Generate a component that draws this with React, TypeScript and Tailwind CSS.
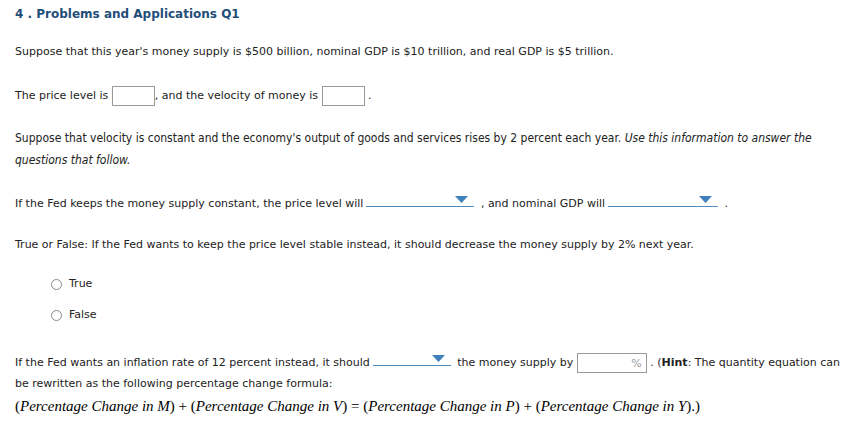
import React from "react";

function Blank() {
  return (
    <span className="inline-block w-[43px] h-[20px] border border-[#9a9a9a] bg-white align-middle" />
  );
}

function Dropdown({ width }: { width: string }) {
  return (
    <span className={`relative inline-block ${width} h-[14px] border-b border-[#4f8cc0] align-baseline mx-[3px]`}>
      <svg
        className="absolute right-[6px] top-[3px]"
        width="13"
        height="7"
        viewBox="0 0 13 7"
      >
        <path d="M0 0 H13 L6.5 7 Z" fill="#3f80bd" />
      </svg>
    </span>
  );
}

function Radio({ label }: { label: string }) {
  return (
    <div className="flex items-center gap-[7px] pl-[36px]">
      <span className="inline-block w-[11px] h-[11px] rounded-full border border-[#8a8a8a] bg-white" />
      <span>{label}</span>
    </div>
  );
}

export default function App() {
  return (
    <div
      className="w-[845px] h-[428px] overflow-hidden bg-white pl-[15px] pr-[5px] text-[11px] text-[#222]"
      style={{ fontFamily: '"DejaVu Sans", Verdana, sans-serif' }}
    >
      <h2 className="pt-[7px] text-[12px] font-bold text-[#1f4e79] leading-[14px]">
        4 . Problems and Applications Q1
      </h2>

      <p className="mt-[24px] leading-[14px]">
        Suppose that this year&apos;s money supply is $500 billion, nominal GDP is $10 trillion, and real GDP is $5 trillion.
      </p>

      <p className="mt-[27px] leading-[20px]">
        The price level is <Blank />, and the velocity of money is <Blank /> .
      </p>

      <p
        className="mt-[21px] leading-[22px] text-[12px] pr-[10px]"
        style={{ fontFamily: '"DejaVu Sans Condensed", "DejaVu Sans", sans-serif' }}
      >
        Suppose that velocity is constant and the economy&apos;s output of goods and services rises by 2 percent each year.{" "}
        <i>Use this information to answer the questions that follow.</i>
      </p>

      <p className="mt-[22px] leading-[16px]">
        If the Fed keeps the money supply constant, the price level will
        <Dropdown width="w-[108px]" /> , and nominal GDP will
        <Dropdown width="w-[110px]" /> .
      </p>

      <p className="mt-[25px] leading-[16px]">
        True or False: If the Fed wants to keep the price level stable instead, it should decrease the money supply by 2% next year.
      </p>

      <div className="mt-[24px] flex flex-col gap-[17px] leading-[14px]">
        <Radio label="True" />
        <Radio label="False" />
      </div>

      <p className="mt-[30px] leading-[21px]">
        <span className="whitespace-nowrap">
          If the Fed wants an inflation rate of 12 percent instead, it should
          <Dropdown width="w-[78px]" /> the money supply by{" "}
          <span className="inline-flex w-[70px] h-[20px] border border-[#9a9a9a] items-center justify-end pr-[4px] text-[#999] align-middle">
            %
          </span>{" "}
          . (<b>Hint</b>: The quantity equation can
        </span>
        <br />
        be rewritten as the following percentage change formula:
      </p>

      <p
        className="mt-[1px] text-[15px] leading-[22px] text-black"
        style={{ fontFamily: '"Liberation Serif", "Times New Roman", serif' }}
      >
        (<i>Percentage Change in M</i>) + (<i>Percentage Change in V</i>) = (<i>Percentage Change in P</i>) + (<i>Percentage Change in Y</i>).)
      </p>
    </div>
  );
}
